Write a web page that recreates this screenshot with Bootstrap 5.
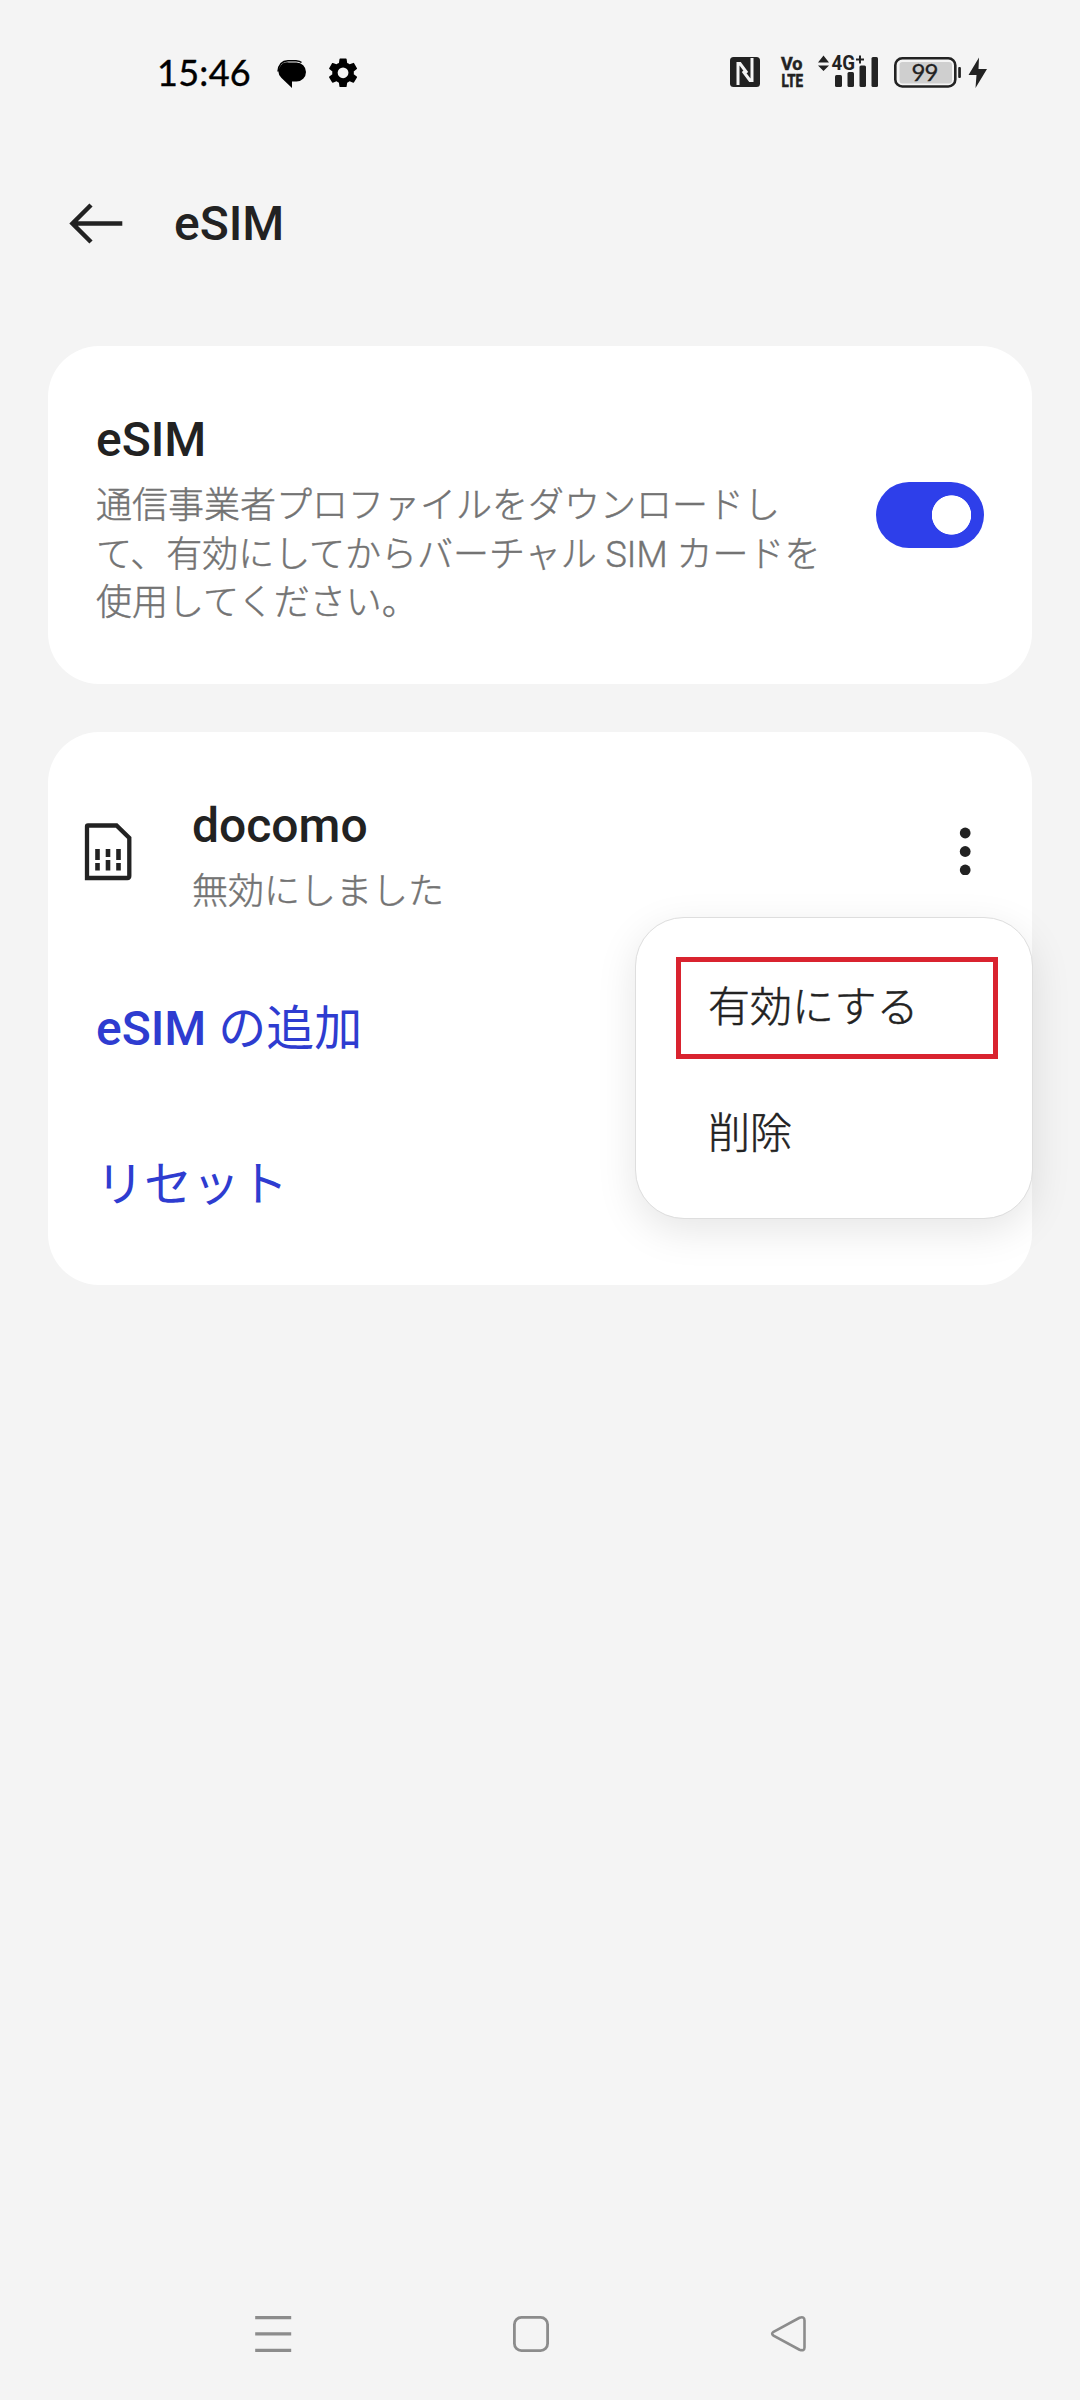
<!DOCTYPE html>
<html lang="ja">
<head>
<meta charset="utf-8">
<meta name="viewport" content="width=device-width, initial-scale=1">
<title>eSIM</title>
<link href="https://cdn.jsdelivr.net/npm/bootstrap@5.3.0/dist/css/bootstrap.min.css" rel="stylesheet">
<style>
  body { background: #f4f4f4; color: #222; font-family: Roboto, "Noto Sans CJK JP", sans-serif; font-size: 36px; }
  svg { display: block; flex: none; }
  svg text { font-family: Roboto, sans-serif; font-weight: 700; }
  .screen { width: 1080px; height: 2400px; }
  .status { height: 146px; padding: 51px 93px 0 157px; }
  .clock { font: 400 36px/43px Lato, sans-serif; width: 120px; white-space: nowrap; letter-spacing: .3px; color: #000; -webkit-text-stroke: .4px #000; }
  .topbar { height: 155px; padding-left: 69px; gap: 50px; }
  .heading { font-size: 48px; line-height: 56px; font-weight: 500; margin: 0; }
  .panel { border: 0; border-radius: 51px; margin: 0 48px; }
  .panel-switch { height: 338px; margin-top: 45px; padding: 66px 48px 0; }
  .panel-list { height: 553px; margin-top: 48px; }
  .desc { width: 735px; margin: 14px 0 0; line-height: 48.6px; color: #737373; font-weight: 300; -webkit-text-stroke: .45px #737373; }
  .toggle.form-check-input { width: 108px; height: 66px; margin: 70px 0 0; float: none; border: 0; border-radius: 33px; background-color: #2e3fea !important;
    background-image: radial-gradient(circle at 75.5px 33px, #fff 19.3px, transparent 20px) !important; background-size: 100% 100%; background-position: 0 0; flex: none; }
  .profile { height: 240px; padding: 66px 58px 0 36px; }
  .sim-glyph { margin-top: 24px; }
  .profile-name { margin-left: 58px; }
  .sub-text { color: #737373; line-height: 48px; margin-top: 14px; font-weight: 300; -webkit-text-stroke: .45px #737373; }
  .more { padding: 0; border: 0; background: none; margin-top: 29px; line-height: 0; }
  .actions { margin-top: 29px; }
  .action { color: #2e3cd0; font-size: 48px; line-height: 56px; font-weight: 500; padding: 0 48px; text-decoration: none; display: block; }
  .action + .action { margin-top: 100px; font-weight: 400; }
  .action span { font-weight: 400; }
  .popup.dropdown-menu { display: block; right: -1px; top: 185px; width: 398px; height: 302px; padding: 39px 34px 0 40px; border: 1px solid #dedede; border-radius: 49px; box-shadow: 0 12px 40px rgba(0,0,0,.1); }
  .popup .dropdown-item { height: 102px; padding: 0 0 0 27px; font-size: 42px; line-height: 91px; border: 5px solid transparent; color: #222; font-weight: 300; -webkit-text-stroke: .5px #222; }
  .popup .picked { border-color: #d9232f; }
  .popup li + li { margin-top: 24px; }
  .navkeys { padding: 0 273px 47px 254px; }
</style>
<script src="https://cdn.jsdelivr.net/npm/bootstrap@5.3.0/dist/js/bootstrap.bundle.min.js"></script>
</head>
<body>
<div class="screen d-flex flex-column overflow-hidden">
  <header class="status d-flex justify-content-between align-items-start">
    <div class="d-flex">
      <div class="clock">15:46</div>
      <svg width="30" height="44" viewBox="277 51 30 44"><path d="M289 62.500H296.500A9.300 9.300 0 0 1 296.500 81.500H292V88L281.500 78A9 9 0 0 1 289 62.500Z"/><path d="M278 71.500Q279 61 288 60.700H296Q300 61 301.500 62.500" fill="none" stroke="#000" stroke-width="1.500"/></svg>
      <svg class="ms-3" width="44" height="44" viewBox="323 51 44 44"><g transform="translate(327 58) scale(1.5 1.48) translate(-1.300 -2)"><path fill-rule="evenodd" d="M19.140 12.940c.040-.3.060-.610.060-.940 0-.320-.020-.640-.070-.940l2.030-1.580a.49.49 0 0 0 .120-.610l-1.920-3.320a.488.488 0 0 0-.590-.220l-2.390.960c-.5-.380-1.030-.7-1.620-.940l-.360-2.540a.484.484 0 0 0-.480-.410h-3.840c-.240 0-.430.170-.470.410l-.360 2.540c-.590.240-1.130.570-1.620.940l-2.390-.960c-.220-.080-.470 0-.590.220L2.740 8.870c-.120.210-.080.470.120.610l2.030 1.580c-.050.3-.090.630-.090.940s.020.640.070.940l-2.030 1.580a.49.49 0 0 0-.120.610l1.920 3.320c.120.220.370.290.590.220l2.390-.960c.5.380 1.030.7 1.620.940l.360 2.540c.050.240.240.410.480.410h3.840c.240 0 .440-.170.470-.410l.360-2.540c.590-.240 1.130-.560 1.620-.940l2.390.960c.220.080.470 0 .590-.220l1.920-3.320c.120-.220.070-.470-.120-.610zM12 15.600a3.600 3.600 0 1 1 0-7.200 3.600 3.600 0 0 1 0 7.200z"/></g></svg>
    </div>
    <svg width="257" height="44" viewBox="730 51 257 44" fill="#222">
      <rect x="730" y="57" width="30" height="30" rx="3.500"/>
      <path d="M738 85V63.500L740 63.500L747 73M752 58V80.500L750 80.500L743 71" fill="none" stroke="#f4f4f4" stroke-width="3"/>
      <text x="781" y="69.500" font-size="18" textLength="21.500" lengthAdjust="spacingAndGlyphs" stroke="#222" stroke-width=".5">Vo</text>
      <text x="781.500" y="86.500" font-size="18.500" textLength="21.500" lengthAdjust="spacingAndGlyphs" stroke="#222" stroke-width=".7">LTE</text>
      <path d="M818 62.500L823.500 55.500 829 62.500ZM818 65.500L823.500 71 829 65.500Z"/>
      <text x="831.500" y="70" font-size="20.500" textLength="23.500" lengthAdjust="spacingAndGlyphs">4G</text>
      <path d="M856 59.500H864M860 55.500V63.500" stroke="#222" stroke-width="2"/>
      <rect x="835" y="75" width="7" height="12" rx="1.500"/><rect x="847.500" y="72" width="6.500" height="15" rx="1.500"/><rect x="859.500" y="65.500" width="6.500" height="21.500" rx="1.500"/><rect x="871.500" y="57" width="6.500" height="30" rx="1.500"/>
      <rect x="895.300" y="58.300" width="60" height="28.200" rx="7" fill="none" stroke="#222" stroke-width="2.600"/>
      <rect x="899.500" y="62" width="52.500" height="21.500" rx="3" fill="#cfcfcf"/>
      <rect x="958.200" y="67" width="2.700" height="11" rx="1"/>
      <text x="911.500" y="81" font-size="24" textLength="27" style="font-family:Lato;font-weight:400" stroke="#222" stroke-width=".3">99</text>
      <path d="M979 57.500L968.500 75H976.500L975.500 88L987 69H978.500Z"/>
    </svg>
  </header>

  <div class="topbar d-flex align-items-center">
    <svg width="55" height="42" viewBox="69 202 55 42"><path d="M73 222.500H122.300M91 204L72.500 222.500L91 241" fill="none" stroke="#222" stroke-width="4.500"/></svg>
    <h1 class="heading">eSIM</h1>
  </div>

  <main>
    <section class="card panel panel-switch flex-row justify-content-between align-items-start">
      <div>
        <h2 class="heading">eSIM</h2>
        <p class="desc">通信事業者プロファイルをダウンロードし<br>て、有効にしてからバーチャル SIM カードを<br>使用してください。</p>
      </div>
      <input class="form-check-input toggle" type="checkbox" role="switch" aria-label="eSIM" checked>
    </section>

    <section class="card panel panel-list">
      <div class="profile d-flex align-items-start">
        <svg class="sim-glyph" width="50" height="60" viewBox="84 822 50 60"><path d="M87 826.500Q87 825.500 88 825.500H116.500L129.300 838V876Q129.300 878 127.300 878H87Z" fill="none" stroke="#222" stroke-width="4.300"/><path d="M97.500 849V860M97.500 863V870.500M108 849V857M108 860V870.500M118.500 849V860M118.500 863V870.500" stroke="#222" stroke-width="4.600"/></svg>
        <div class="profile-name flex-grow-1">
          <h2 class="heading">docomo</h2>
          <div class="sub-text">無効にしました</div>
        </div>
        <button class="more" type="button" aria-label="メニュー"><svg width="18" height="48" viewBox="956 827 18 48" fill="#222"><circle cx="965.200" cy="833" r="5.400"/><circle cx="965.200" cy="851.500" r="5.400"/><circle cx="965.200" cy="870" r="5.400"/></svg></button>
      </div>
      <nav class="actions">
        <a class="action" href="#">eSIM <span>の追加</span></a>
        <a class="action" href="#">リセット</a>
      </nav>
      <ul class="dropdown-menu popup">
        <li><a class="dropdown-item picked" href="#">有効にする</a></li>
        <li><a class="dropdown-item" href="#">削除</a></li>
      </ul>
    </section>
  </main>

  <footer class="navkeys mt-auto d-flex justify-content-between">
    <svg width="38" height="38" viewBox="254 2315 38 38"><path d="M255.200 2317.600H291.200M255.200 2333.900H291.200M255.200 2350.300H291.200" stroke="#8c8c8c" stroke-width="3.200"/></svg>
    <svg width="38" height="38" viewBox="512 2315 38 38"><rect x="514.400" y="2317.400" width="33.200" height="33.200" rx="7" fill="none" stroke="#8c8c8c" stroke-width="2.800"/></svg>
    <svg width="38" height="38" viewBox="769 2315 38 38"><path d="M773.500 2331.800L799.500 2317.800Q804.500 2316 804.500 2320.500V2347.500Q804.500 2351.500 799.500 2349.700L773.500 2335.600Q770.800 2333.700 773.500 2331.800Z" fill="none" stroke="#8c8c8c" stroke-width="2.600"/></svg>
  </footer>
</div>
</body>
</html>
